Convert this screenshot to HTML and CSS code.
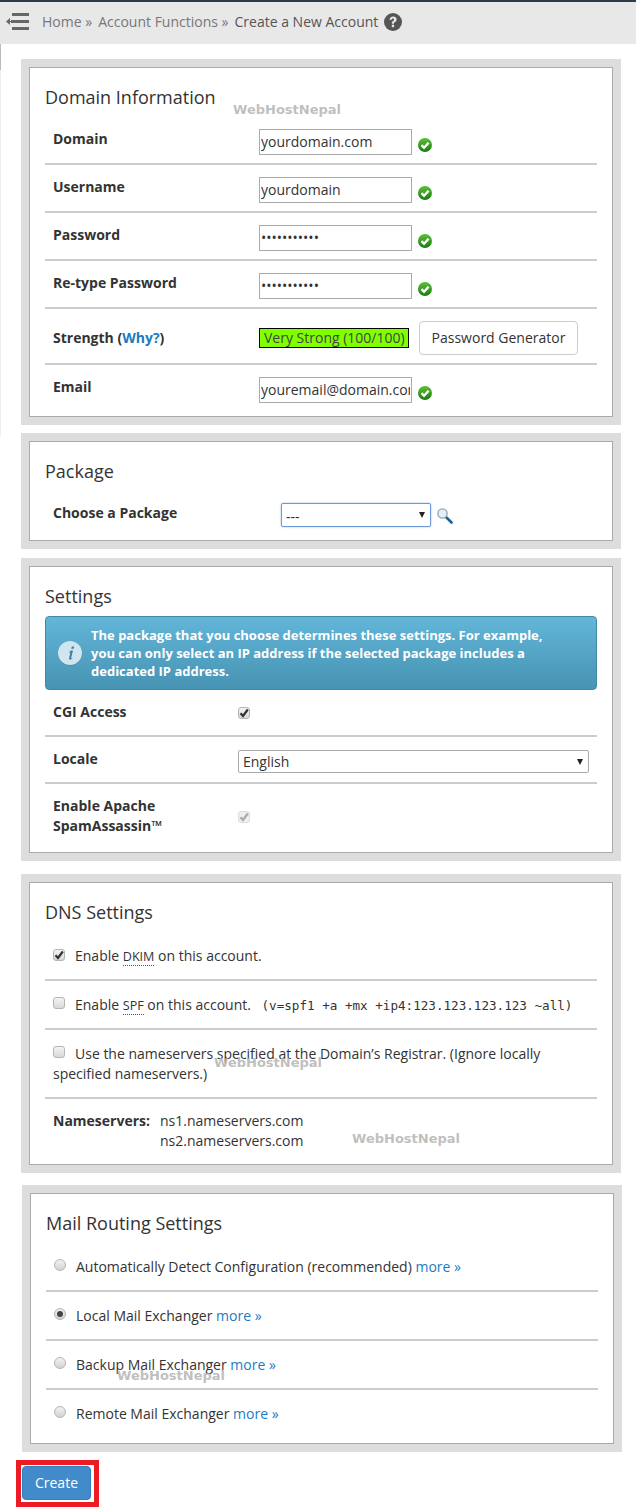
FILE: index.html
```html
<!DOCTYPE html>
<html lang="en">
<head>
<meta charset="utf-8">
<title>Create a New Account</title>
<link rel="stylesheet" href="styles.css">
</head>
<body>
<div class="page">
  <header class="crumbs">
    <svg class="menu-icon" width="23" height="17" viewBox="0 0 23 17"><path d="M0 8.500 4 5v7z" fill="#666"/><rect x="4" y="8" width="2" height="1" fill="#666"/><rect x="6" y="0" width="17" height="3" fill="#666"/><rect x="5" y="7" width="18" height="3" fill="#666"/><rect x="6" y="14" width="17" height="3" fill="#666"/></svg>
    <span class="crumb crumb-home">Home »</span>
    <span class="crumb">Account Functions »</span>
    <span class="crumb-current">Create a New Account</span>
    <svg class="help-icon" width="18" height="18" viewBox="0 0 18 18"><circle cx="9" cy="9" r="9" fill="#555"/><path d="M5.500 6.800C5.700 4.700 7.100 3.400 9.100 3.400c2.100 0 3.500 1.300 3.500 3 0 1.300-.6 2-1.600 2.700-.8.500-1 .8-1 1.600H7.800c0-1.400.3-2 1.300-2.700.7-.5 1-.9 1-1.500 0-.7-.4-1.100-1.100-1.100-.7 0-1.200.5-1.300 1.400z" fill="#e8e8e8"/><rect x="7.800" y="11.700" width="2.300" height="2.500" fill="#e8e8e8"/></svg>
  </header>
  <div class="edge-line"></div>

  <main class="content">
    <span class="mark mark-1">WebHostNepal</span>
    <span class="mark mark-2">WebHostNepal</span>
    <span class="mark mark-3">WebHostNepal</span>
    <span class="mark mark-4">WebHostNepal</span>

    <section class="panel">
      <div class="panel-body">
        <h2>Domain Information</h2>
        <div class="row form-row"><label>Domain</label><div class="ctl"><input class="text" type="text" value="yourdomain.com"><svg class="ok"><use href="#ok"/></svg></div></div>
        <div class="row form-row"><label>Username</label><div class="ctl"><input class="text" type="text" value="yourdomain"><svg class="ok"><use href="#ok"/></svg></div></div>
        <div class="row form-row"><label>Password</label><div class="ctl"><input class="text" type="password" value="abcdefghijk"><svg class="ok"><use href="#ok"/></svg></div></div>
        <div class="row form-row"><label>Re-type Password</label><div class="ctl"><input class="text" type="password" value="abcdefghijk"><svg class="ok"><use href="#ok"/></svg></div></div>
        <div class="row form-row strength-row"><label class="strength-label">Strength (<a href="#">Why?</a>)</label><div class="ctl"><span class="meter">Very Strong (100/100)</span><button class="btn-light" type="button">Password Generator</button></div></div>
        <div class="row form-row last-row"><label>Email</label><div class="ctl"><input class="text" type="text" value="youremail@domain.com"><svg class="ok"><use href="#ok"/></svg></div></div>
      </div>
    </section>

    <section class="panel panel-package">
      <div class="panel-body">
        <h2>Package</h2>
        <div class="row package-row">
          <label>Choose a Package</label>
          <div class="ctl">
            <span class="select-wrap package-select"><select class="select focused"><option>---</option></select></span>
            <svg class="lens" width="16" height="16" viewBox="0 0 16 16"><path d="M9.500 9.500 14.500 14.500" stroke="#1f5f8f" stroke-width="2.600" stroke-linecap="round"/><circle cx="5.500" cy="5.500" r="4.600" fill="#e6eff5" stroke="#8fa3b0" stroke-width="1.300"/></svg>
          </div>
        </div>
      </div>
    </section>

    <section class="panel panel-settings">
      <div class="panel-body">
        <h2>Settings</h2>
        <div class="alert">
          <svg class="info" width="24" height="26" viewBox="0 0 24 26"><circle cx="12" cy="12.600" r="12" fill="#3a7f9c"/><circle cx="12" cy="12" r="12" fill="#cfe5ef"/><path d="M13.800 5.500h2.400l-.5 2.300h-2.400zM12.700 9.500h2.300l-1.900 7.500c-.1.500.3.600 1 .1l.3.500c-1.200 1.200-3.600 1.700-3.300-.3l1.300-5.800c-.4.200-.7.400-1.100.5l-.2-.5z" fill="#3f7f9c"/></svg>
          <p>The package that you choose determines these settings. For example, you can only select an IP address if the selected package includes a dedicated IP address.</p>
        </div>
        <div class="row settings-row"><label>CGI Access</label><div class="ctl"><span class="cb on"><svg width="10" height="10" viewBox="0 0 10 10"><path d="M1.500 5.200 4 8l4.800-6.500" fill="none" stroke="#333" stroke-width="2.200"/></svg></span></div></div>
        <div class="row settings-row locale-row"><label>Locale</label><div class="ctl"><span class="select-wrap locale-select"><select class="select"><option>English</option></select></span></div></div>
        <div class="row settings-row last-settings"><label>Enable Apache<br>SpamAssassin™</label><div class="ctl"><span class="cb off"><svg width="10" height="10" viewBox="0 0 10 10"><path d="M1.500 5.200 4 8l4.800-6.500" fill="none" stroke="#aaa" stroke-width="2.200"/></svg></span></div></div>
      </div>
    </section>

    <section class="panel panel-dns">
      <div class="panel-body">
        <h2>DNS Settings</h2>
        <div class="row opt-row tight"><span class="cb on inline"><svg width="10" height="10" viewBox="0 0 10 10"><path d="M1.500 5.200 4 8l4.800-6.500" fill="none" stroke="#333" stroke-width="2.200"/></svg></span>Enable <abbr>DKIM</abbr> on this account.</div>
        <div class="row opt-row tight"><span class="cb inline"></span>Enable <abbr>SPF</abbr> on this account. <code>(v=spf1 +a +mx +ip4:123.123.123.123 ~all)</code></div>
        <div class="row opt-row"><span class="cb inline"></span>Use the nameservers specified at the Domain’s Registrar. (Ignore locally specified nameservers.)</div>
        <div class="ns-row"><strong>Nameservers:</strong><div>ns1.nameservers.com<br>ns2.nameservers.com</div></div>
      </div>
    </section>

    <section class="panel panel-mail">
      <div class="panel-body">
        <h2>Mail Routing Settings</h2>
        <div class="row radio-row"><span class="radio"></span>Automatically Detect Configuration (recommended) <a href="#">more »</a></div>
        <div class="row radio-row"><span class="radio on"></span>Local Mail Exchanger <a href="#">more »</a></div>
        <div class="row radio-row"><span class="radio"></span>Backup Mail Exchanger <a href="#">more »</a></div>
        <div class="row radio-row last-radio"><span class="radio"></span>Remote Mail Exchanger <a href="#">more »</a></div>
      </div>
    </section>

    <div class="create-box"><button class="btn-create" type="button">Create</button></div>
  </main>
</div>

<svg class="defs" width="0" height="0">
  <defs>
    <linearGradient id="okg" x1="0" y1="0" x2="0" y2="1"><stop offset="0" stop-color="#5cc034"/><stop offset="1" stop-color="#1c7a12"/></linearGradient>
    <symbol id="ok" viewBox="0 0 14 14"><circle cx="7" cy="7" r="7" fill="url(#okg)"/><path d="M3.500 7.200 6 9.700l4.600-4.900" fill="none" stroke="#fff" stroke-width="2.400"/></symbol>
  </defs>
</svg>
</body>
</html>
```
FILE: styles.css
```css
* { box-sizing: border-box; }
html, body { margin: 0; padding: 0; background: #fff; }
body { font-family: "Open Sans", sans-serif; font-size: 14px; line-height: 20px; color: #333; }
.page { position: relative; width: 636px; height: 1512px; overflow: hidden; border-top: 2px solid #2c3a4b; }
.defs { position: absolute; }

.crumbs { height: 42px; background: #e8e8e8; display: flex; align-items: center; padding: 0 0 2px 6px; color: #777; }
.menu-icon { margin: 0 13px 1px 0; flex: none; }
.crumb { margin-right: 5px; }
.crumb-home { margin-right: 6px; }
.crumb-current { color: #555; margin: 0 6px 0 1px; }
.help-icon { flex: none; }
.edge-line { position: absolute; left: 0; top: 42px; width: 1px; height: 393px; background: linear-gradient(#bbb 26px, #eee 26px); }

.content { position: relative; padding: 15px 0 0 21px; }
.mark { position: absolute; font-family: "DejaVu Sans", sans-serif; font-weight: 700; font-size: 13px; line-height: 16px; color: rgba(180,180,180,.85); z-index: 2; white-space: nowrap; }
.mark-1 { left: 233px; top: 58px; }
.mark-2 { left: 214px; top: 1011px; }
.mark-3 { left: 352px; top: 1087px; }
.mark-4 { left: 117px; top: 1324px; }

.panel { width: 600px; background: #ddd; padding: 8px; margin-bottom: 8px; }
.panel-body { background: #fff; border: 1px solid #aaa; padding: 0 15px; }
.panel-settings { margin-top: 9px; margin-bottom: 13px; }
.panel-dns { margin-bottom: 12px; }
.panel-mail { margin-left: 1px; }
h2 { margin: 0; height: 49px; padding-top: 19px; font-size: 18px; line-height: 20px; font-weight: 400; color: #333; }

.row { border-bottom: 2px solid #ccc; }
label, strong { font-weight: 700; color: #333; }
.form-row { display: grid; grid-template-columns: 214px 1fr; padding: 12px 0 8px; }
.form-row label { padding-left: 8px; }
.ctl { display: flex; align-items: flex-start; }
.text { width: 153px; height: 26px; border: 1px solid #aaa; padding: 0 1px 2px; margin: 0; font: 14px/20px "Open Sans", sans-serif; color: #333; background: #fff; border-radius: 0; outline: 0; }
.ok { width: 14px; height: 14px; margin: 9px 0 0 6px; flex: none; }
.strength-label { padding-top: 7px; }
a { color: #1b7bc4; text-decoration: none; }
.strength-label a { font-weight: 700; }
.meter { width: 150px; height: 20px; margin-top: 7px; background: #7fff00; border: 1px solid #000; font-size: 14px; line-height: 18px; padding-left: 4px; color: #444; white-space: nowrap; overflow: hidden; }
.btn-light { width: 159px; height: 34px; margin-left: 10px; border: 1px solid #ccc; border-radius: 4px; background: #fff; font: 14px/20px "Open Sans", sans-serif; color: #333; padding: 0; }
.last-row { border-bottom: 0; padding-bottom: 13px; }

.package-row { display: grid; grid-template-columns: 236px 1fr; padding: 12px 0 13px; border-bottom: 0; }
.package-row label { padding-left: 8px; }
.select-wrap { position: relative; display: block; flex: none; }
.select-wrap::after { content: ""; position: absolute; right: 6px; top: 9px; border-left: 3.500px solid transparent; border-right: 3.500px solid transparent; border-top: 6px solid #222; pointer-events: none; }
.select { appearance: none; -webkit-appearance: none; display: block; width: 100%; height: 100%; margin: 0; background: #fff; font: 14px/20px "Open Sans", sans-serif; color: #333; border: 1px solid #aaa; border-radius: 2px; padding: 0 0 0 4px; outline: 0; }
.package-select { width: 150px; height: 24px; }
.package-select .select { padding-top: 3px; }
.focused { border-color: #6a9bd8; box-shadow: 0 0 2px #8fb6e8; }
.lens { margin: 5px 0 0 6px; flex: none; }

.alert { display: flex; height: 74px; padding: 9px 12px 0 12px; background: linear-gradient(#62b6d8, #4793b3); border: 1px solid #3f88a6; border-radius: 4px; color: #fff; }
.info { flex: none; margin: 15px 9px 0 0; }
.alert p { width: 470px; margin: 0; font-size: 13px; font-weight: 700; line-height: 18px; }

.settings-row { display: grid; grid-template-columns: 193px 1fr; padding: 12px 0 13px; }
.settings-row label { padding-left: 8px; }
.settings-row .ctl { padding-top: 5px; }
.locale-row { padding-bottom: 9px; }
.locale-row .ctl { padding-top: 1px; }
.locale-select { width: 351px; height: 23px; }
.last-settings { border-bottom: 0; padding-bottom: 16px; }
.last-settings .ctl { padding-top: 15px; }

.cb { display: inline-flex; align-items: center; justify-content: center; width: 12px; height: 12px; border: 1px solid #b5b5b5; border-radius: 3px; background: linear-gradient(#f4f4f4, #d8d8d8); flex: none; }
.cb.off { border-color: #ddd; background: #efefef; }
.cb.inline { margin-right: 10px; position: relative; top: -1px; }

.opt-row { padding: 14px 0 13px 8px; }
.tight { padding-bottom: 12px; }
code { font-family: "DejaVu Sans Mono", monospace; font-size: 12.600px; margin-left: 7px; }
abbr { font-size: 12.600px; border-bottom: 1px dotted #555; }
.ns-row { display: flex; padding: 12px 0 13px 8px; }
.ns-row strong { width: 107px; flex: none; }

.radio-row { padding: 14px 0 13px 8px; }
.radio { display: inline-block; width: 12px; height: 12px; margin-right: 10px; border-radius: 50%; border: 1px solid #b5b5b5; background: linear-gradient(#f2f2f2, #d2d2d2); position: relative; top: -1px; }
.radio.on::after { content: ""; position: absolute; left: 2px; top: 2px; width: 6px; height: 6px; border-radius: 50%; background: #444; }
.last-radio { border-bottom: 0; padding-bottom: 19px; }

.create-box { width: 83px; height: 47px; margin: 8px 0 0 -5px; border: 5px solid #ed1c24; padding: 1px 0 0 1px; }
.btn-create { display: block; width: 69px; height: 34px; border: 1px solid #357ebd; border-radius: 4px; background: #428bca; color: #fff; font: 14px/20px "Open Sans", sans-serif; padding: 0; }
```
